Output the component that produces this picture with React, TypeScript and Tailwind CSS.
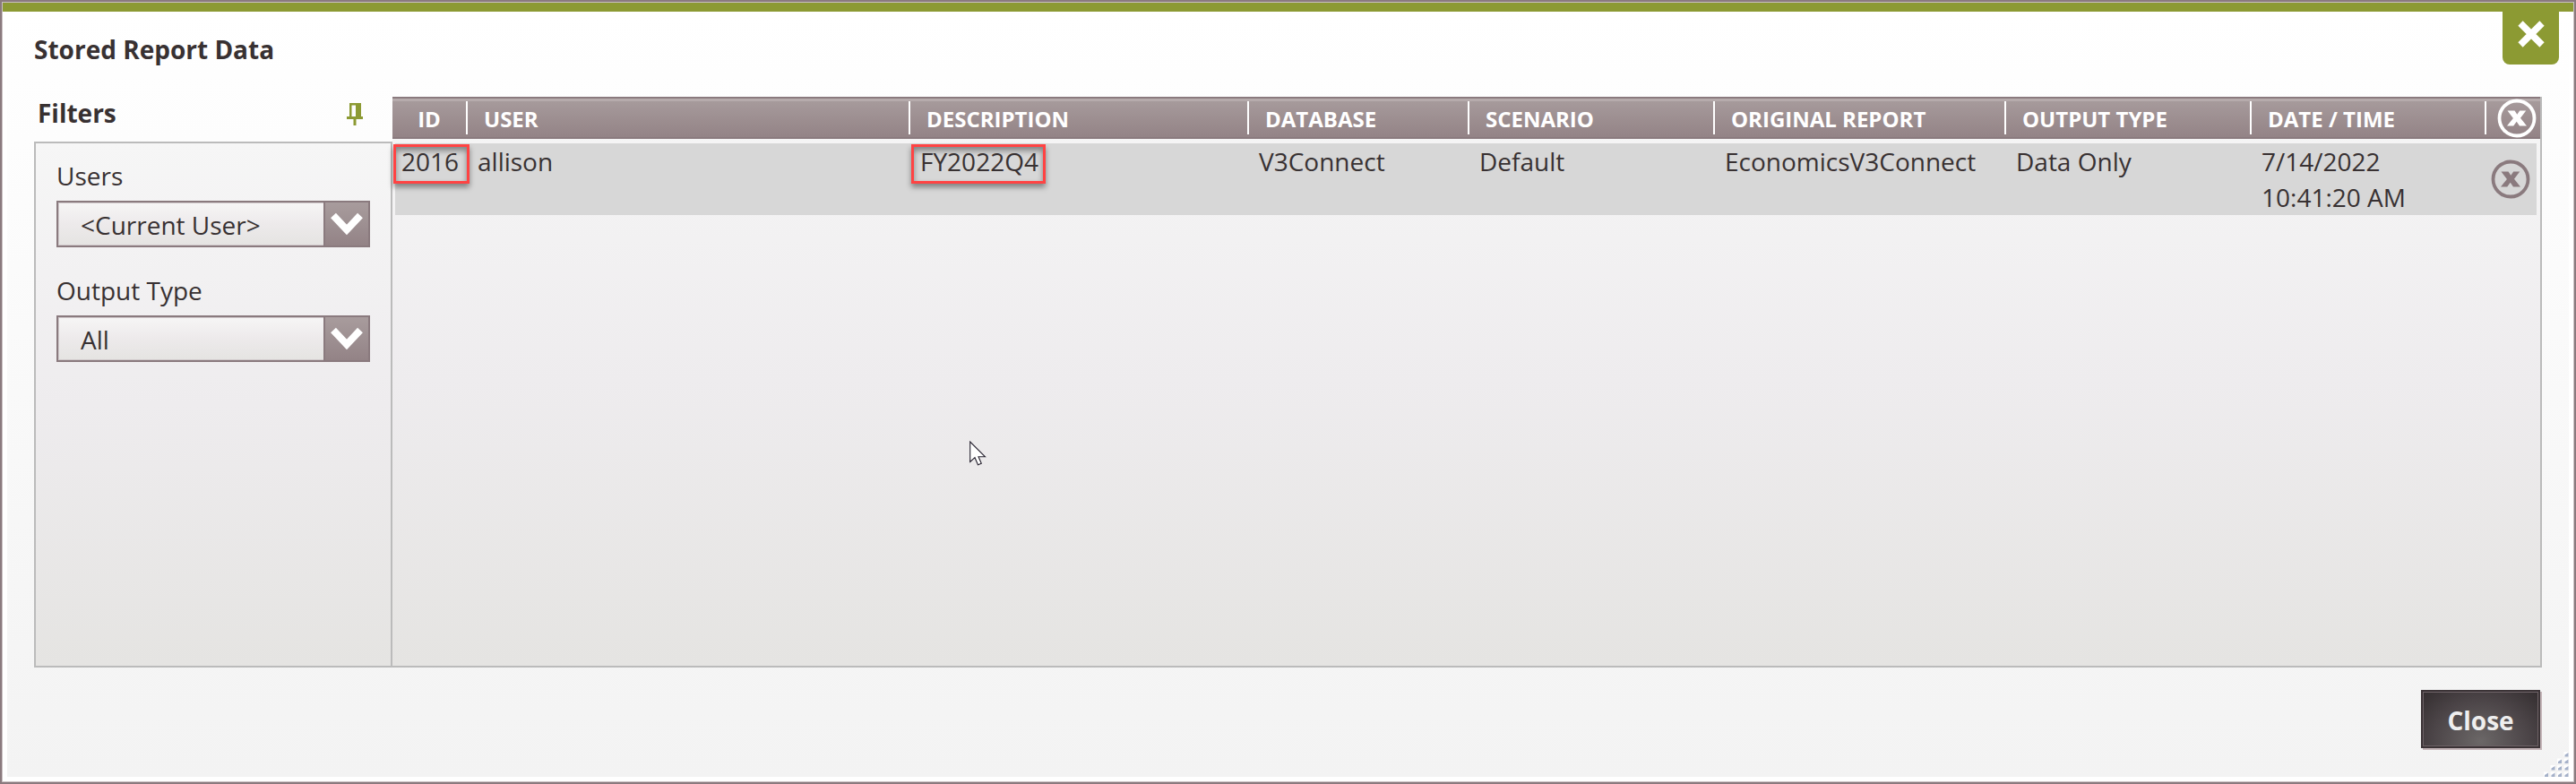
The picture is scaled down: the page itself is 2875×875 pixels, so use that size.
import React, { useState } from "react";

interface StoredReport {
  id: number;
  user: string;
  description: string;
  database: string;
  scenario: string;
  originalReport: string;
  outputType: string;
  date: string;
  time: string;
}

const REPORTS: StoredReport[] = [
  {
    id: 2016,
    user: "allison",
    description: "FY2022Q4",
    database: "V3Connect",
    scenario: "Default",
    originalReport: "EconomicsV3Connect",
    outputType: "Data Only",
    date: "7/14/2022",
    time: "10:41:20 AM",
  },
];

const COLUMNS = [
  { label: "ID", width: "w-[84px]" },
  { label: "USER", width: "" },
  { label: "DESCRIPTION", width: "w-[378px]" },
  { label: "DATABASE", width: "w-[246px]" },
  { label: "SCENARIO", width: "w-[274px]" },
  { label: "ORIGINAL REPORT", width: "w-[325px]" },
  { label: "OUTPUT TYPE", width: "w-[274px]" },
  { label: "DATE / TIME", width: "w-[262px]" },
];

const TH = "h-[47px] border-y-2 border-[#8a7a7e] bg-linear-to-b from-[#a89c9d] to-[#938386] p-0 shadow-[inset_0_3px_0_#b6abac]";
const TD = "border-t-[5px] border-transparent bg-[#d7d7d7] bg-clip-padding py-0 pr-0 pl-[11px] align-top";

const CircleX = () => (
  <svg viewBox="0 0 44 44" className="size-11" fill="none" aria-hidden="true">
    <circle cx="22" cy="22" r="19.5" stroke="currentColor" strokeWidth="3.8" />
    <path
      d="M11.5 13.5H19.5L22.3 17.8L25.2 13.5H32.2L26 21.7L33 30.5H25L21.7 25.8L18.2 30.5H11L17.9 21.9Z"
      fill="currentColor"
    />
  </svg>
);

interface FilterSelectProps {
  id: string;
  label: string;
  value: string;
  options: string[];
  onChange: (value: string) => void;
}

const FilterSelect: React.FC<FilterSelectProps> = ({ id, label, value, options, onChange }) => (
  <div className="flex flex-col gap-2">
    <label htmlFor={id} className="text-[28px] leading-10">
      {label}
    </label>
    <div className="relative flex h-[52px] border-2 border-[#8a7a7e]">
      <select
        id={id}
        value={value}
        onChange={(e) => onChange(e.target.value)}
        className="w-full appearance-none border border-[#d0c9cb] bg-linear-to-b from-[#f6f5f5] via-[#edeaeb] to-[#e5e4e2] pt-0.5 pr-14 pl-6 text-[28px] leading-10 outline-none"
      >
        {options.map((option) => (
          <option key={option}>{option}</option>
        ))}
      </select>
      <span className="pointer-events-none absolute inset-y-0 right-0 flex w-[50px] items-center justify-center border-l-2 border-[#8a7a7e] bg-linear-to-b from-[#a89c9d] to-[#938386]">
        <svg viewBox="0 0 36 26" className="h-[26px] w-9" fill="none" aria-hidden="true">
          <path d="M3 3.5L18 19.5L33 3.5" stroke="#fff" strokeWidth="8" />
        </svg>
      </span>
    </div>
  </div>
);

// Dotted triangle in the window corner
const ResizeGrip = () => (
  <svg viewBox="0 0 28 28" className="absolute right-0 bottom-0 size-7" aria-hidden="true">
    {[0, 1, 2, 3].map((row) =>
      [0, 1, 2, 3]
        .filter((col) => col + row >= 3)
        .map((col) => (
          <g key={`${row}-${col}`}>
            <rect x={col * 7.5} y={row * 7.5} width="5" height="5" fill="#fff" />
            <path d={`M${col * 7.5 + 5} ${row * 7.5 + 1}v4.5h-4v-2z`} fill="#a5b1c9" />
          </g>
        ))
    )}
  </svg>
);

const App: React.FC = () => {
  const [user, setUser] = useState("<Current User>");
  const [outputType, setOutputType] = useState("All");

  return (
    <div className="min-h-screen border-2 border-[#8a7a7e] bg-white font-['Open_Sans','Noto_Sans',sans-serif] text-[#383132]">
      <div className="relative flex min-h-[calc(100vh-4px)] flex-col border border-[#c9c0c2] px-[5px] pb-[5px]">
        <div className="-mx-[5px] h-[10px] bg-[#8c9a33]" />
        <button
          type="button"
          aria-label="Close window"
          className="absolute top-0 right-4 z-10 flex h-[69px] w-[63px] items-center justify-center rounded-b-lg bg-[#8c9a33]"
        >
          <svg viewBox="0 0 30 30" className="size-[30px]" fill="none" aria-hidden="true">
            <path d="M3 3L27 27M27 3L3 27" stroke="#fff" strokeWidth="7.5" />
          </svg>
        </button>

        <div className="relative flex flex-1 flex-col bg-linear-to-b from-white to-[#f3f3f3] px-[30px] pt-[22px] pb-8">
          <h1 className="text-[28px] leading-10 font-bold">Stored Report Data</h1>

          <div className="mt-[33px] flex flex-1">
            <aside className="flex w-[400px] shrink-0 flex-col">
              <div className="flex h-[50px] items-start justify-between pr-[33px] pl-1">
                <h2 className="text-[28px] leading-9 font-bold">Filters</h2>
                <button type="button" aria-label="Pin filters" className="pt-[7px]">
                  <svg viewBox="0 0 18 25" className="h-[25px] w-[18px]" fill="#8c9a33" aria-hidden="true">
                    <path d="M3 0H16V15H18V18H10.5V25H7.5V18H0V15H3ZM5.5 2.5V15H10V2.5Z" fillRule="evenodd" />
                  </svg>
                </button>
              </div>
              <div className="flex flex-1 flex-col gap-7 border-2 border-[#bbb] bg-linear-to-b from-[#f6f6f6] via-[#eeecee] to-[#e5e4e2] px-[23px] pt-4">
                <FilterSelect
                  id="users"
                  label="Users"
                  value={user}
                  options={["<Current User>", "allison"]}
                  onChange={setUser}
                />
                <FilterSelect
                  id="output-type"
                  label="Output Type"
                  value={outputType}
                  options={["All", "Data Only"]}
                  onChange={setOutputType}
                />
              </div>
            </aside>

            <main className="relative flex-1 border-r-2 border-b-2 border-[#bbb] bg-linear-to-b from-[#f6f6f6] via-[#eeecee] to-[#e5e4e2]">
              <table className="w-full table-fixed border-separate border-spacing-0 text-left">
                <thead>
                  <tr>
                    {COLUMNS.map(({ label, width }) => (
                      <th key={label} className={`${TH} ${width}`}>
                        <div
                          className={`flex h-[37px] items-center border-r-2 border-white pt-0.5 text-[24px] leading-8 font-bold whitespace-nowrap text-white ${
                            label === "ID" ? "justify-center" : "pl-[18px]"
                          }`}
                        >
                          {label}
                        </div>
                      </th>
                    ))}
                    <th className={`${TH} w-[60px]`}>
                      <button type="button" aria-label="Delete all" className="-my-1 ml-3 block text-white">
                        <CircleX />
                      </button>
                    </th>
                  </tr>
                </thead>
                <tbody className="text-[28px] leading-10">
                  {REPORTS.map((report) => (
                    <tr key={report.id}>
                      <td className="relative border-t-[5px] border-l-[3px] border-transparent bg-[#d7d7d7] bg-clip-padding p-0 pl-[7px] align-top">
                        {report.id}
                        <span className="absolute top-px -left-0.5 z-10 h-11 w-[85px] border-3 border-[#ff4343] shadow-[0_4px_6px_#0006,inset_0_4px_6px_#0006]" />
                      </td>
                      <td className={TD}>{report.user}</td>
                      <td className={`relative ${TD}`}>
                        {report.description}
                        <span className="absolute top-px left-px z-10 h-11 w-[150px] border-3 border-[#ff4343] shadow-[0_4px_6px_#0006,inset_0_4px_6px_#0006]" />
                      </td>
                      <td className={TD}>{report.database}</td>
                      <td className={TD}>{report.scenario}</td>
                      <td className={TD}>{report.originalReport}</td>
                      <td className={TD}>{report.outputType}</td>
                      <td className={TD}>
                        {report.date}
                        <br />
                        {report.time}
                      </td>
                      <td className="border-t-[5px] border-r-[4px] border-transparent bg-[#d7d7d7] bg-clip-padding p-0 pl-[5px]">
                        <button type="button" aria-label="Delete report" className="block text-[#8a7a7e]">
                          <CircleX />
                        </button>
                      </td>
                    </tr>
                  ))}
                </tbody>
              </table>
              <svg viewBox="0 0 20 28" className="pointer-events-none absolute top-96 left-[644px] h-7 w-5" aria-hidden="true">
                <path d="M.7 1V23.5L6 18.7L9.5 26.8L13.3 25.2L10 17.8H17.5Z" fill="#fff" stroke="#26222f" strokeWidth="1.1" />
              </svg>
            </main>
          </div>

          <div className="mt-[25px] flex justify-end pr-0.5">
            <button
              type="button"
              className="h-[65px] w-[133px] border-2 border-[#3b3336] bg-[radial-gradient(ellipse_at_50%_90%,#6b6767,#4b4447_60%,#332d2f)] pt-0.5 text-[28px] leading-10 font-bold text-[#eee] shadow-[2px_2px_0_#c4b5b8,inset_0_0_0_1px_#6d6266]"
            >
              Close
            </button>
          </div>
          <ResizeGrip />
        </div>
      </div>
    </div>
  );
};

export default App;
